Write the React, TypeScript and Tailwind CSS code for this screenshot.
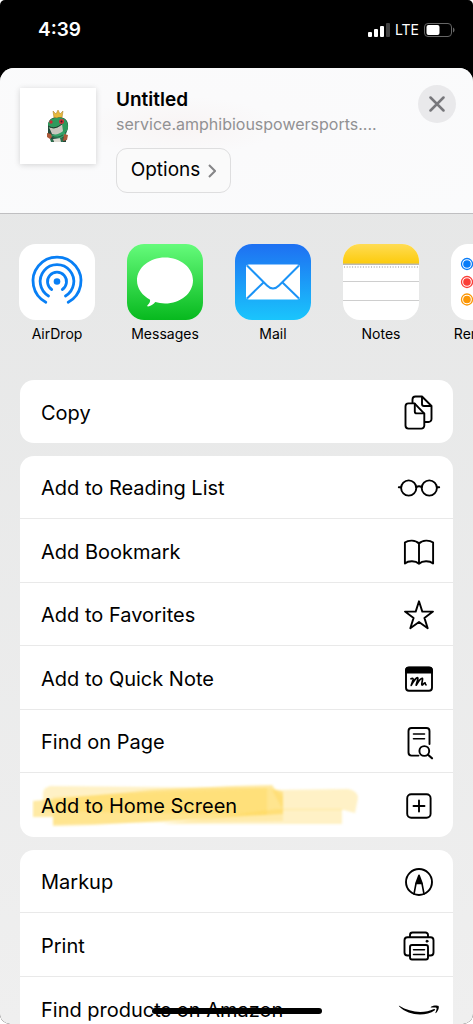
import React from 'react'

interface RowProps {
  label: string
  icon: React.ReactNode
  highlighted?: boolean
}

interface AppTileProps {
  label: string
  children: React.ReactNode
}

const ActionIcon = ({ children }: { children: React.ReactNode }) => (
  <svg
    className="w-11 h-11 shrink-0"
    viewBox="0 0 44 44"
    fill="none"
    stroke="currentColor"
    strokeWidth="1.9"
    strokeLinecap="round"
    strokeLinejoin="round"
    aria-hidden="true"
  >
    {children}
  </svg>
)

const CopyIcon = () => (
  <ActionIcon>
    <path d="M15.500 12V8.500a3 3 0 0 1 3-3H25l9.500 9.500V28a3 3 0 0 1-3 3h-3.500" />
    <path d="M25 6v7a2 2 0 0 0 2 2h7" />
    <path d="M11.500 12.400h6l9.800 10.200v12a3 3 0 0 1-3 3H11.500a3 3 0 0 1-3-3V15.400a3 3 0 0 1 3-3Z" />
    <path d="M17.800 12.600v7.800a2 2 0 0 0 2 2h7.400" />
  </ActionIcon>
)

const GlassesIcon = () => (
  <ActionIcon>
    <circle cx="11.7" cy="22" r="7.6" />
    <circle cx="32.3" cy="22" r="7.6" />
    <path d="M19.3 21.2q2.7-1.800 5.400 0M4 21.300H1.800M40 21.300h2.200" />
  </ActionIcon>
)

const BookIcon = () => (
  <ActionIcon>
    <path d="M22 13.5C18.5 9.8 11.5 9.8 7.900 12.600V33.500c3.600-3 10.600-3 14.100.3 3.500-3.300 10.500-3.300 14.100-.3V12.600c-3.600-2.800-10.600-2.800-14.100.9ZM22 13.500v20.300" />
  </ActionIcon>
)

const StarIcon = () => (
  <ActionIcon>
    <path d="M22 8.300l3.300 10.300h10.700l-8.600 6.300 3.300 10.300-8.700-6.300-8.700 6.300 3.300-10.300-8.600-6.300h10.700Z" />
  </ActionIcon>
)

const QuickNoteIcon = () => (
  <ActionIcon>
    <rect x="9" y="10.7" width="26" height="23" rx="3" />
    <path d="M9 15.5v-2a3 3 0 0 1 3-3h20a3 3 0 0 1 3 3v2Z" fill="currentColor" />
    <path
      strokeWidth="1.7"
      d="M14 21.800c1.600-1 2.500-.3 2.100 1l-1.900 5.600c2-3.600 5.300-8 6.500-7.700 1 .3-1.100 5-1.500 7.500 2-3.400 5-7.300 6.200-6.800.9.400-1.200 5.200-.5 6.500.8.900 1.900-2.400 3-2.100.8.300 0 1.900 1.100 2"
    />
  </ActionIcon>
)

const FindIcon = () => (
  <ActionIcon>
    <path d="M21.500 35.600h-7a3 3 0 0 1-3-3V11a3 3 0 0 1 3-3h15a3 3 0 0 1 3 3v13" />
    <path d="M16.500 14h11M16.500 18.800h11" strokeWidth="1.6" />
    <circle cx="27.3" cy="31" r="4.9" />
    <path d="M31 34.700l4 3.600" strokeWidth="2.200" />
  </ActionIcon>
)

const AddIcon = () => (
  <ActionIcon>
    <rect x="10.2" y="10.3" width="23.4" height="23.4" rx="4" />
    <path d="M22 16.500v11M16.500 22h11" />
  </ActionIcon>
)

const MarkupIcon = () => (
  <ActionIcon>
    <circle cx="22" cy="22" r="13" />
    <path d="M17 34l2-10.500h6L27 34" strokeWidth="1.600" />
    <path d="M19.200 23L22 15.500 24.800 23Z" fill="currentColor" />
  </ActionIcon>
)

const PrinterIcon = () => (
  <ActionIcon>
    <path d="M13 13v-2a2.500 2.500 0 0 1 2.500-2.500h13A2.500 2.500 0 0 1 31 11v2" />
    <path d="M13 31.500h-2.500a3 3 0 0 1-3-3V16.200a3 3 0 0 1 3-3h23a3 3 0 0 1 3 3V28.500a3 3 0 0 1-3 3H31" />
    <rect x="13" y="21" width="18" height="14.5" rx="2" />
    <path d="M16.500 25.700h11M16.500 30.400h11" strokeWidth="1.500" />
    <circle cx="30" cy="17.2" r="1" fill="currentColor" strokeWidth="1" />
  </ActionIcon>
)

const AmazonIcon = () => (
  <ActionIcon>
    <path
      d="M2.200 17.800c10.800 6.600 24.300 8.200 34.800 3.200.9-.4 1.600.6.800 1.200C28.500 28.900 11.500 28 2 18.300c-.4-.4-.2-.7.2-.5Z"
      fill="currentColor"
      stroke="none"
    />
    <path
      d="M34 18.800c2.200-1.600 6.500-1.500 7.500-.8 1 1-.3 5.400-2.500 7-.4.300-.8.100-.6-.3.700-1.700 1.500-4.100 1.100-4.800-.5-.6-3.200-.5-5.300-.4-.5 0-.6-.400-.2-.7Z"
      fill="currentColor"
      stroke="none"
    />
  </ActionIcon>
)

const AppTile = ({ label, children }: AppTileProps) => (
  <a href="#" className="w-19 shrink-0 flex flex-col items-center gap-1">
    <svg className="w-19 h-19 rounded-[17px] bg-white" viewBox="0 0 76 76" aria-hidden="true">
      {children}
    </svg>
    <span className="text-[14px] leading-5 whitespace-nowrap">{label}</span>
  </a>
)

const Row = ({ label, icon, highlighted = false }: RowProps) => (
  <li className="relative odd:h-[63px] even:h-16 border-b border-[#e9e9e9] last:border-b-0">
    {highlighted && (
      <svg className="absolute left-3 top-2 w-[330px] h-12" viewBox="0 0 330 48" fill="#ffd54a" aria-hidden="true">
        <defs>
          <filter id="marker">
            <feGaussianBlur stdDeviation="1.3" />
          </filter>
        </defs>
        <g filter="url(#marker)">
          <path fillOpacity=".32" d="M11 12q0-5 7-7L235 7V34L11 30Z" />
          <path fillOpacity=".5" d="M1 20L120 9 200 5l40-1 3 4 8 3V33L150 39 60 44l-39 1V36H1Z" />
          <path fillOpacity=".22" d="M21 16L240 7l11 8v25L21 43Z" />
          <path fillOpacity=".32" d="M240 9l76-1q10 2 10 9l-3 15-11-3H251Z" />
          <path fillOpacity=".32" d="M245 28h65v15H130Z" />
        </g>
      </svg>
    )}
    <button className="relative w-full h-full flex items-center justify-between pt-0.5 pl-[21px] pr-3 text-left">
      <span className="text-[20px] leading-6">{label}</span>
      {icon}
    </button>
  </li>
)

const ActionGroup = ({ children }: { children: React.ReactNode }) => (
  <ul className="bg-white rounded-[14px] overflow-hidden shrink-0">{children}</ul>
)

const StatusBar = () => (
  <div className="h-[68px] shrink-0 flex items-start justify-between pt-4 pl-[38px] pr-[18px] text-white">
    <span className="text-[19px] leading-7 font-semibold">4:39</span>
    <div className="flex items-center gap-[5px] h-7">
      <svg className="w-[22px] h-[14px]" viewBox="0 0 22 14" fill="currentColor" aria-hidden="true">
        <rect x="0" y="9" width="4" height="5" rx="1" />
        <rect x="6" y="6" width="4" height="8" rx="1" />
        <rect x="12" y="3" width="4" height="11" rx="1" />
        <rect x="18" y="0" width="4" height="14" rx="1" opacity=".25" />
      </svg>
      <span className="text-[14px] leading-5">LTE</span>
      <svg className="w-[31px] h-[14px]" viewBox="0 0 31 14" aria-hidden="true">
        <rect x=".5" y=".5" width="27" height="13" rx="3.5" fill="none" stroke="#666" />
        <rect x="2.500" y="2" width="13" height="10" rx="2" fill="#fff" />
        <path d="M29 4.500c2 .7 2 4.300 0 5Z" fill="#666" />
      </svg>
    </div>
  </div>
)

const FrogLogo = () => (
  <svg className="w-[24px] h-[36px]" viewBox="0 0 24 36" aria-hidden="true">
    <path d="M7 3l3 3 2-4 2 4 3-3-1 7H8Z" fill="#e5b93d" stroke="#a97b20" strokeWidth=".5" />
    <path d="M2 17c1-6 4-8 9-7 8-2 12 3 11 10l-2 6v8H6L2 26Z" fill="#23483a" />
    <path d="M2 16c1-4 4-6 8-6 7-2 12 2 12 9 0 5-4 7-8 7-7 0-12-5-12-10Z" fill="#2e9a5d" />
    <path d="M3 19c5 3 9 1 13-3l1 7-5 5-6-2Z" fill="#c9c6bd" />
    <path d="M2 18c5 3 9 2 14-2" fill="none" stroke="#20352c" />
    <circle cx="5" cy="14" r="1.7" fill="#c92c35" />
    <circle cx="15.5" cy="13.5" r="2.5" fill="#d1303a" />
    <circle cx="15.5" cy="13.5" r="1" fill="#361c20" />
    <path d="M2 28c4-3 8 0 12-3 3-2 6-1 6 2l-6 4Z" fill="#36a268" />
    <path d="M6 28q5 3 11-1" fill="none" stroke="#23483a" strokeWidth=".8" />
    <path d="M1 25l4 1 1 3-2 2-3-2ZM18 26l4 1-1 5-4 1Z" fill="#ad5939" />
    <path d="M7 31l8-1v4H8Z" fill="#dedbd2" />
    <path d="M4 31h3v3H5ZM14 30h3v4h-2Z" fill="#2d6f4e" />
  </svg>
)

export default function App() {
  return (
    <div className="bg-white">
      <div className="relative h-screen overflow-hidden flex flex-col rounded-t-[5px] rounded-b-[10px] bg-black text-black font-['Inter',sans-serif]">
        <StatusBar />

        <div className="flex-1 min-h-0 flex flex-col rounded-t-[14px] overflow-hidden bg-linear-to-b from-[#e5e6e6] to-[#efefef]">
          {/* Shared page */}
          <header className="h-[146px] shrink-0 flex items-start px-5 pt-5 border-b border-[#bfbfc1] bg-[radial-gradient(ellipse_at_38%_40%,#f8f4f4_0%,#fafafb_24%,#fafbfc_100%)]">
            <div className="w-19 h-19 shrink-0 bg-white shadow-[0_1px_6px_rgba(0,0,0,0.16)] flex items-center justify-center">
              <FrogLogo />
            </div>
            <div className="ml-5 flex-1 min-w-0">
              <h1 className="text-[19px] leading-6 font-semibold">Untitled</h1>
              <p className="text-[16px] leading-6 text-[#919193]">service.amphibiouspowersports....</p>
              <button className="mt-3 h-[45px] w-[115px] flex items-center justify-center gap-2 rounded-[11px] border border-[#dededf] bg-[#fafafa] text-[19px]">
                Options
                <svg className="w-2 h-[14px]" viewBox="0 0 8 14" fill="none" stroke="#858587" strokeWidth="2" aria-hidden="true">
                  <path d="M1 1l6 6-6 6" />
                </svg>
              </button>
            </div>
            <button aria-label="Close" className="-ml-8 -mt-[3px] -mr-[3px] w-[38px] h-[38px] shrink-0 rounded-full bg-[#e9e9eb] flex items-center justify-center">
              <svg className="w-4 h-4" viewBox="0 0 16 16" stroke="#77777b" strokeWidth="2.5" strokeLinecap="round" aria-hidden="true">
                <path d="M1.500 1.500l13 13M14.500 1.500l-13 13" />
              </svg>
            </button>
          </header>

          {/* Apps */}
          <nav className="shrink-0 flex gap-8 pl-[19px] pt-[30px] pb-[36px] overflow-hidden">
            <AppTile label="AirDrop">
              <g fill="none" stroke="#087ff5" strokeWidth="2.8" strokeLinecap="round">
                <path d="M26.800 58.300a24 24 0 1 1 22.400 0" />
                <path d="M29.500 52a16.800 16.800 0 1 1 17 0" />
                <path d="M32.700 45.500a9.500 9.500 0 1 1 10.600 0" />
              </g>
              <circle cx="38" cy="37.5" r="3.3" fill="#087ff5" />
            </AppTile>
            <AppTile label="Messages">
              <defs>
                <linearGradient id="messages" x2="0" y2="1">
                  <stop stopColor="#65fb7b" />
                  <stop offset="1" stopColor="#07b91e" />
                </linearGradient>
              </defs>
              <rect width="76" height="76" fill="url(#messages)" />
              <path
                d="M38 13.500c15.500 0 28 10.200 28 23s-12.500 23-28 23c-3.500 0-6.700-.5-9.700-1.400-2 2.500-4.800 4.300-7.300 4.300-1 0-.9-.9-.3-1.400 1.800-1.600 2.600-3.400 2.400-5.300C15.300 51.500 10 44.500 10 36.500c0-12.800 12.500-23 28-23Z"
                fill="#fff"
              />
            </AppTile>
            <AppTile label="Mail">
              <defs>
                <linearGradient id="mail" x2="0" y2="1">
                  <stop stopColor="#1e70f2" />
                  <stop offset="1" stopColor="#1ac5fc" />
                </linearGradient>
              </defs>
              <rect width="76" height="76" fill="url(#mail)" />
              <rect x="11" y="20.5" width="54" height="35" rx="3" fill="#fff" />
              <path
                d="M12 21.500l20 20q6 6 12 0l20-20M12 54.500l17-16.500M64 54.500L47 38"
                fill="none"
                stroke="#1b93f6"
                strokeWidth="2"
              />
            </AppTile>
            <AppTile label="Notes">
              <defs>
                <linearGradient id="notes" x2="0" y2="1">
                  <stop stopColor="#ffdc54" />
                  <stop offset="1" stopColor="#fccb0a" />
                </linearGradient>
              </defs>
              <rect width="76" height="20" fill="url(#notes)" />
              <path d="M0 20.300h76" stroke="#bcb9b0" strokeWidth="1.500" />
              <path d="M1 23h75" stroke="#c8c8c8" strokeWidth="2" strokeDasharray="1 1.7" />
              <path d="M0 37.500h76M0 56.500h76" stroke="#cecece" />
            </AppTile>
            <AppTile label="Reminders">
              <g fill="none" strokeWidth="1.3">
                <circle cx="16" cy="20" r="5.5" stroke="#087cf8" />
                <circle cx="16" cy="38" r="5.5" stroke="#fb3e37" />
                <circle cx="16" cy="55.5" r="5.5" stroke="#fb9706" />
              </g>
              <circle cx="16" cy="20" r="3.8" fill="#087cf8" />
              <circle cx="16" cy="38" r="3.8" fill="#fb3e37" />
              <circle cx="16" cy="55.5" r="3.8" fill="#fb9706" />
              <path d="M27 20h49M27 38h49M27 55.500h49" stroke="#d5d5d5" />
            </AppTile>
          </nav>

          {/* Actions */}
          <main className="flex flex-col gap-[13px] px-5">
            <ActionGroup>
              <Row label="Copy" icon={<CopyIcon />} />
            </ActionGroup>
            <ActionGroup>
              <Row label="Add to Reading List" icon={<GlassesIcon />} />
              <Row label="Add Bookmark" icon={<BookIcon />} />
              <Row label="Add to Favorites" icon={<StarIcon />} />
              <Row label="Add to Quick Note" icon={<QuickNoteIcon />} />
              <Row label="Find on Page" icon={<FindIcon />} />
              <Row label="Add to Home Screen" icon={<AddIcon />} highlighted />
            </ActionGroup>
            <ActionGroup>
              <Row label="Markup" icon={<MarkupIcon />} />
              <Row label="Print" icon={<PrinterIcon />} />
              <Row label="Find products on Amazon" icon={<AmazonIcon />} />
            </ActionGroup>
          </main>
        </div>

        {/* Home indicator */}
        <div className="absolute bottom-[10px] left-1/2 -translate-x-1/2 w-[170px] h-[6px] rounded-full bg-black"></div>
      </div>
    </div>
  )
}
